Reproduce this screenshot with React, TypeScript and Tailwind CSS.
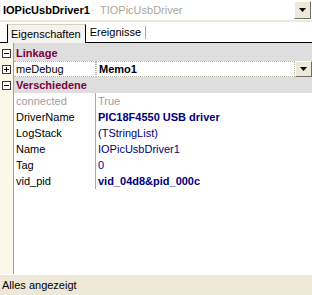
import React from "react";

type Prop = {
  name: string;
  value: string;
  bold?: boolean;
  muted?: boolean;
};

const FONT = "font-['Liberation_Sans',Tahoma,Arial,sans-serif]";

const props: Prop[] = [
  { name: "connected", value: "True", muted: true },
  { name: "DriverName", value: "PIC18F4550 USB driver", bold: true },
  { name: "LogStack", value: "(TStringList)" },
  { name: "Name", value: "IOPicUsbDriver1" },
  { name: "Tag", value: "0" },
  { name: "vid_pid", value: "vid_04d8&pid_000c", bold: true },
];

function ExpandBox({ open }: { open: boolean }) {
  return (
    <svg width="9" height="9" viewBox="0 0 9 9" className="block">
      <rect x="0.5" y="0.5" width="8" height="8" fill="#fff" stroke="#3a3a3a" />
      <line x1="2" y1="4.5" x2="7" y2="4.5" stroke="#000" />
      {!open && <line x1="4.5" y1="2" x2="4.5" y2="7" stroke="#000" />}
    </svg>
  );
}

function DropButton({ h }: { h: string }) {
  return (
    <div
      className={`w-[17px] ${h} shrink-0 bg-[#ece9d8] border border-t-white border-l-white border-r-[#716f64] border-b-[#716f64] flex items-center justify-center`}
    >
      <svg width="7" height="4" viewBox="0 0 7 4">
        <polygon points="0,0 7,0 3.5,4" fill="#000" />
      </svg>
    </div>
  );
}

function Gutter({ children }: { children?: React.ReactNode }) {
  return (
    <div className="w-[14px] shrink-0 h-full bg-[#fdf7ea] border-r border-[#9d9d93] flex items-center justify-center pr-[1px]">
      {children}
    </div>
  );
}

function CategoryRow({ label }: { label: string }) {
  return (
    <div className="flex h-4">
      <Gutter>
        <ExpandBox open />
      </Gutter>
      <div className="flex-1 bg-[#dedede] flex items-center pl-[2px] font-bold text-[#7f0040]">
        {label}
      </div>
    </div>
  );
}

function PropRow({ p }: { p: Prop }) {
  const valueColor = p.muted ? "text-[#a0a0a0]" : "text-[#000080]";
  return (
    <div className="flex h-4">
      <Gutter />
      <div className="w-[82px] shrink-0 border-r border-[#a9a9a9] flex items-center pl-[2px] bg-white">
        <span className={p.muted ? "text-[#a0a0a0]" : "text-black"}>{p.name}</span>
      </div>
      <div className={`flex-1 bg-white flex items-center pl-[2px] ${valueColor} ${p.bold ? "font-bold" : ""}`}>
        {p.value}
      </div>
    </div>
  );
}

export default function App() {
  return (
    <div className={`w-[312px] h-[295px] bg-[#ece9d8] flex flex-col text-[11px] leading-none overflow-hidden ${FONT}`}>
      {/* Component selector */}
      <div className="h-[20px] bg-white flex items-center">
        <span className="pl-[3px] w-[100px] font-bold text-black">IOPicUsbDriver1</span>
        <span className="flex-1 text-[#aca899]">TIOPicUsbDriver</span>
        <div className="pr-[1px]">
          <DropButton h="h-[18px]" />
        </div>
      </div>
      <div className="h-[2px]" />

      {/* Tabs */}
      <div className="h-[21px] bg-white flex items-end">
        <div className="w-[7px] h-full border-b border-black" />
        <div className="h-[19px] pl-[3px] pr-[4px] flex items-center bg-[#f4f3ee] border-l border-r border-black border-t border-t-[#d6d3c4]">
          Eigenschaften
        </div>
        <div className="h-full flex-1 flex items-center border-b border-black">
          <span className="pl-[4px] pr-[4px]">Ereignisse</span>
          <div className="w-px h-[13px] bg-[#aca899]" />
        </div>
      </div>
      <div className="h-[2px] bg-[#dedede] flex">
        <div className="w-[14px] bg-[#fdf7ea] border-r border-[#9d9d93]" />
      </div>

      {/* Property grid */}
      <div className="flex-1 flex flex-col bg-white">
        <CategoryRow label="Linkage" />
        <div className="flex h-4">
          <Gutter>
            <ExpandBox open={false} />
          </Gutter>
          <div className="w-[82px] shrink-0 border-r border-[#a9a9a9] flex items-center pl-[2px] bg-white border-t border-b border-dotted border-t-[#b8b4a4] border-b-[#b8b4a4]">
            meDebug
          </div>
          <div className="flex-1 flex items-center border border-dotted border-[#b8b4a4] pl-[2px] font-bold text-black">
            Memo1
          </div>
          <DropButton h="h-4" />
        </div>
        <CategoryRow label="Verschiedene" />
        {props.map((p) => (
          <PropRow key={p.name} p={p} />
        ))}
        <div className="flex-1 flex">
          <Gutter />
          <div className="flex-1 bg-white" />
        </div>
      </div>

      {/* Status bar */}
      <div className="h-[21px] border-t border-white flex items-center pl-[2px] text-black">
        Alles angezeigt
      </div>
    </div>
  );
}
